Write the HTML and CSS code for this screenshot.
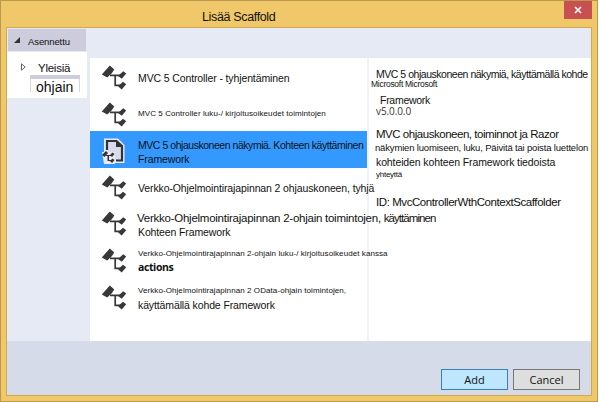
FILE: index.html
```
<!DOCTYPE html>
<html lang="fi">
<head>
<meta charset="utf-8">
<title>Lisää Scaffold</title>
<link rel="stylesheet" href="styles.css">
</head>
<body>
<svg class="defs" width="0" height="0">
  <symbol id="ctl" viewBox="0 0 26 26">
    <path d="M9 10.3H21M14.2 10.3V20.3H20" fill="none" stroke="#383838" stroke-width="1.7"/>
    <path d="M0.8 9.4L8.8 0.6L13.3 4.4L10.8 8.2L6.2 12.5ZM17 11L22.2 6.2L25.2 8.6L20.8 13.8ZM17 21.2L22 16.8L25.2 19.3L20.7 24.6Z" fill="#383838"/>
  </symbol>
</svg>
<div class="window">
  <header class="titlebar"><span class="title">Lisää Scaffold</span>
    <button class="close"><svg width="8" height="8" viewBox="0 0 8 8"><path d="M1 1L7 7M7 1L1 7" stroke="#fff" stroke-width="1.6"/></svg></button>
  </header>
  <main class="client">
    <section class="body">
      <nav class="side">
        <div class="group"><svg width="6" height="6" viewBox="0 0 6 6"><path d="M6 0V6H0Z" fill="#333"/></svg><span class="installed">Asennettu</span></div>
        <div class="tree">
          <div class="node"><svg width="5" height="8" viewBox="0 0 5 8"><path d="M.5 .8L4.2 4L.5 7.2Z" fill="#fff" stroke="#555" stroke-width=".9"/></svg><span class="general">Yleisiä</span></div>
          <div class="child"><span>ohjain</span></div>
        </div>
      </nav>
      <div class="content">
        <ul class="list">
          <li class="row r1"><svg class="icon"><use href="#ctl"/></svg><div class="label"><p class="m">MVC 5 Controller - tyhjentäminen</p></div></li>
          <li class="row r2"><svg class="icon"><use href="#ctl"/></svg><div class="label"><p class="s">MVC 5 Controller luku-/ kirjoitusoikeudet toimintojen</p></div></li>
          <li class="row r3 selected"><svg class="icon" viewBox="0 0 26 26"><path d="M3 .5H17L23.5 7V25H3Z" fill="#e8eaf4"/><path d="M6 12V3H15.5L21 8V22.5H15" fill="#d9daea" stroke="#333" stroke-width="2.2"/><path d="M15 2V9H21Z" fill="#333"/><path d="M1 14H14V26H3Z" fill="#e8eaf4"/><path d="M1 17L5 13L7 15L3.5 19ZM9 17L11.5 14.5L13.5 16L11 19ZM9 23L11.5 20.5L13.5 22L11 25ZM5 17H10V18H8V22H10V23H6.5V18H5Z" fill="#333"/></svg><div class="label"><p class="m tight">MVC 5 ohjauskoneen näkymiä. Kohteen käyttäminen</p><p class="m">Framework</p></div></li>
          <li class="row r4"><svg class="icon"><use href="#ctl"/></svg><div class="label"><p class="m">Verkko-Ohjelmointirajapinnan 2 ohjauskoneen, tyhjä</p></div></li>
          <li class="row r5"><svg class="icon"><use href="#ctl"/></svg><div class="label"><p class="l">Verkko-Ohjelmointirajapinnan 2-ohjain toimintojen, <span class="squeezed">käyttäminen</span></p><p class="m">Kohteen Framework</p></div></li>
          <li class="row r6"><svg class="icon"><use href="#ctl"/></svg><div class="label"><p class="s">Verkko-Ohjelmointirajapinnan 2-ohjain luku-/ kirjoitusoikeudet kanssa</p><p class="bold">actions</p></div></li>
          <li class="row r7"><svg class="icon"><use href="#ctl"/></svg><div class="label"><p class="s">Verkko-Ohjelmointirajapinnan 2 OData-ohjain toimintojen,</p><p class="m">käyttämällä kohde Framework</p></div></li>
        </ul>
        <aside class="details">
          <p class="d1">MVC 5 ohjauskoneen näkymiä, käyttämällä kohde</p>
          <p class="d2">Microsoft Microsoft</p>
          <p class="d3">Framework</p>
          <p class="d4">v5.0.0.0</p>
          <p class="d5">MVC ohjauskoneen, toiminnot ja Razor</p>
          <p class="d6">näkymien luomiseen, luku, Päivitä tai poista luettelon</p>
          <p class="d7">kohteiden kohteen Framework tiedoista</p>
          <p class="d8">yhteyttä</p>
          <p class="d9">ID: MvcControllerWthContextScaffolder</p>
        </aside>
      </div>
    </section>
    <footer class="footer"><button class="btn primary">Add</button><button class="btn">Cancel</button></footer>
  </main>
</div>
</body>
</html>
```
FILE: styles.css
```
* { box-sizing: border-box; }
body { margin: 0; background: #fff; font-family: "Liberation Sans", Arial, sans-serif; color: #111; overflow: hidden; }
p, ul { margin: 0; padding: 0; list-style: none; }
p, span { white-space: nowrap; }
button { padding: 0; font: inherit; color: inherit; }
.defs { display: block; }
.window { width: 598px; height: 402px; padding: 0 5px 5px 5px; background: #f0c869; border: 1px solid #b99850; display: flex; flex-direction: column; }
.titlebar { height: 26px; flex: none; display: flex; justify-content: flex-end; align-items: flex-start; }
.title { flex: 1; padding-left: 196px; font-size: 12.5px; letter-spacing: -.35px; line-height: 15px; margin-top: 9px; }
.close { width: 28px; height: 18px; background: #c75050; border: 0; display: flex; align-items: center; justify-content: center; }
.client { flex: 1; border: 1px solid #d1a94f; display: flex; flex-direction: column; background: #e6eaf5; min-height: 0; }
.body { flex: 1; display: flex; min-height: 0; }
.side { width: 83px; flex: none; padding-top: 1px; }
.group { width: 78px; height: 22px; margin-left: 1px; background: #ccccdc; display: flex; padding-left: 6px; }
.group svg { margin-top: 8px; }
.installed { font-size: 9.5px; letter-spacing: -.1px; line-height: 14px; margin: 6px 0 0 8px; }
.tree { background: #fff; width: 80px; height: 46px; margin-top: 1px; }
.node { height: 23px; display: flex; padding-left: 14px; }
.node svg { margin-top: 11px; }
.general { font-size: 11.5px; letter-spacing: -.26px; line-height: 14px; margin: 9px 0 0 12px; }
.child { width: 50px; height: 17px; margin-left: 23px; border: solid #d5d5e3; border-width: 4px 1px 0; border-top-color: #ccccdc; font-size: 14px; line-height: 17px; padding-left: 5px; }
.content { flex: 1; margin-top: 30px; background: #fff; display: flex; min-width: 0; }
.list { width: 277px; flex: none; position: relative; z-index: 1; }
.row { height: 37px; display: flex; padding-left: 11px; }
.r2, .r4 { height: 36px; }
.icon { width: 26px; height: 26px; flex: none; margin-top: 7px; }
.label { margin-left: 11px; padding-top: 7px; }
.selected { background: #3399ff; }
.m { font-size: 10.5px; letter-spacing: -.12px; line-height: 14px; }
.m.tight { letter-spacing: -.46px; }
.s { font-size: 8px; letter-spacing: .08px; line-height: 14px; }
.l { font-size: 11.5px; letter-spacing: -.25px; line-height: 14px; margin-left: -1px; }
.squeezed { letter-spacing: -.95px; }
.bold { font-family: "Open Sans", sans-serif; font-size: 10.5px; letter-spacing: -.4px; font-weight: 700; line-height: 14px; }
.r1 .label { padding-top: 13px; }
.r2 .label { padding-top: 12px; }
.r4 .label { padding-top: 13px; }
.r6 .label { padding-top: 6px; }
.r6 .bold { margin-top: -1px; }
.r7 .label { padding-top: 6px; }
.r3 .m + .m { letter-spacing: -.12px; }
.details { flex: 1; border-left: 2px solid #f1f1fa; padding: 9px 0 0 7px; min-width: 0; }
.details p { line-height: 14px; }
.d1 { font-size: 10.5px; letter-spacing: -.47px; }
.d2 { font-size: 8.5px; letter-spacing: -.28px; margin: -4px 0 0 -5px; }
.d3 { font-size: 10.5px; letter-spacing: -.27px; margin: 2px 0 0 4px; }
.d4 { font-family: "Open Sans", sans-serif; font-size: 10px; letter-spacing: -.09px; margin-top: -3px; color: #333; }
.d5 { font-size: 11.5px; letter-spacing: -.47px; margin-top: 9px; }
.d6 { font-size: 9.5px; letter-spacing: -.17px; margin-left: -1px; }
.d7 { font-size: 10.5px; letter-spacing: -.11px; }
.d8 { font-size: 8px; letter-spacing: -.25px; margin-top: -1px; }
.d9 { font-size: 11.5px; letter-spacing: -.43px; margin-top: 13px; }
.footer { height: 54px; background: #d5dbe9; display: flex; justify-content: flex-end; gap: 5px; padding: 28px 11px 0 0; }
.btn { width: 67px; height: 21px; border: 1px solid #777; background: #dedede; font: 11px/18px "Open Sans", sans-serif; }
.primary { background: #bee6fd; border-color: #3c7fb1; }
```
